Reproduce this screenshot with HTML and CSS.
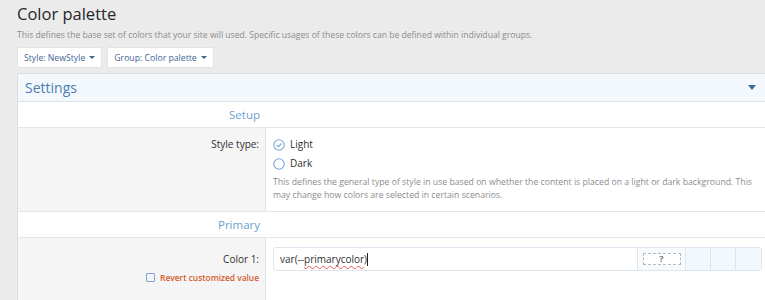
FILE: index.html
```html
<!DOCTYPE html>
<html>
<head>
<meta charset="utf-8">
<link rel="stylesheet" href="styles.css">
</head>
<body>
<div class="page">
  <h1 class="title">Color palette</h1>
  <p class="desc">This defines the base set of colors that your site will used. Specific usages of these colors can be defined within individual groups.</p>
  <div class="buttons">
    <span class="btn">Style: NewStyle <span class="caret"></span></span>
    <span class="btn">Group: Color palette <span class="caret"></span></span>
  </div>
  <div class="panel">
    <div class="panel-head">
      <span>Settings</span>
      <span class="head-caret"></span>
    </div>
    <div class="section">
      <div class="section-title">Setup</div>
      <div></div>
    </div>
    <div class="row row-style">
      <div class="label-cell"><span class="label">Style type:</span></div>
      <div class="value-cell">
        <div class="radio"><span class="radio-ico checked"><svg width="12" height="12" viewBox="0 0 12 12"><circle cx="6" cy="6" r="5.2" fill="none" stroke="#7aa6d6" stroke-width="1.1"/><path d="M3.6 6.1 L5.3 7.7 L8.4 4.5" fill="none" stroke="#7aa6d6" stroke-width="1.2"/></svg></span>Light</div>
        <div class="radio"><span class="radio-ico"><svg width="12" height="12" viewBox="0 0 12 12"><circle cx="6" cy="6" r="5.2" fill="none" stroke="#7aa6d6" stroke-width="1.1"/></svg></span>Dark</div>
        <p class="hint">This defines the general type of style in use based on whether the content is placed on a light or dark background. This may change how colors are selected in certain scenarios.</p>
      </div>
    </div>
    <div class="section">
      <div class="section-title">Primary</div>
      <div></div>
    </div>
    <div class="row row-color">
      <div class="label-cell">
        <span class="label">Color 1:</span>
        <span class="revert"><span class="box"></span>Revert customized value</span>
      </div>
      <div class="value-cell">
        <div class="color-input">
          <span class="input-text">var(--<span class="spell">primarycolor</span>)<span class="cursor"></span></span>
          <span class="qcell"><span class="qbox">?</span></span>
          <span class="swatch"></span>
          <span class="swatch"></span>
          <span class="swatch"></span>
        </div>
      </div>
    </div>
  </div>
</div>
</body>
</html>
```
FILE: styles.css
```css
html, body {
  margin: 0;
  padding: 0;
  background: #ebebeb;
  font-family: "Open Sans", "Noto Sans", sans-serif;
  color: #141414;
  overflow: hidden;
}
.page {
  padding: 2px 0 0 17px;
}
.title {
  margin: 0;
  font-size: 16.5px;
  font-weight: 400;
  line-height: 24px;
  color: #262626;
}
.desc {
  margin: 3px 0 0;
  font-size: 8.6px;
  line-height: 12px;
  color: #8c8c8c;
}
.buttons {
  display: flex;
  gap: 5px;
  margin-top: 6px;
}
.btn {
  display: flex;
  align-items: center;
  gap: 4px;
  height: 21px;
  padding: 0 6px;
  background: #fff;
  border: 1px solid #e2e2e2;
  border-radius: 2px;
  box-sizing: border-box;
  font-size: 8.7px;
  color: #3f6595;
}
.caret {
  width: 0;
  height: 0;
  border-left: 3px solid transparent;
  border-right: 3px solid transparent;
  border-top: 3.5px solid #3f6595;
}
.panel {
  margin-top: 5px;
  background: #fff;
  border: 1px solid #dedede;
  border-right: none;
}
.panel-head {
  display: flex;
  justify-content: space-between;
  align-items: center;
  height: 27px;
  padding: 0 9px 0 7px;
  background: #f3f8fd;
  border-bottom: 1px solid #dbe3ea;
  font-size: 14px;
  color: #4d7db3;
}
.head-caret {
  width: 0;
  height: 0;
  border-left: 4px solid transparent;
  border-right: 4px solid transparent;
  border-top: 5px solid #3d6a9c;
}
.section {
  display: grid;
  grid-template-columns: 248px 1fr;
  height: 25px;
  align-items: center;
  border-bottom: 1px solid #e6e6e6;
}
.section-title {
  text-align: right;
  padding-right: 6px;
  font-size: 11.5px;
  color: #6e9fd2;
}
.row {
  display: grid;
  grid-template-columns: 248px 1fr;
  border-bottom: 1px solid #e6e6e6;
}
.label-cell {
  background: #f5f5f5;
  border-right: 1px solid #e3e3e3;
  display: flex;
  flex-direction: column;
  align-items: flex-end;
  padding: 9px 6px 0 0;
}
.label {
  font-size: 10px;
  line-height: 14px;
  color: #2f2f2f;
}
.value-cell {
  padding: 7px 3px 0 7px;
}
.row-style {
  height: 84px;
  box-sizing: border-box;
}
.radio {
  display: flex;
  align-items: center;
  gap: 5px;
  font-size: 10px;
  line-height: 19px;
  color: #2f2f2f;
}
.radio-ico {
  display: flex;
}
.hint {
  margin: 3px 0 0;
  font-size: 8.7px;
  line-height: 13px;
  color: #8c8c8c;
  padding-right: 8px;
}
.row-color {
  height: 70px;
  box-sizing: border-box;
}
.row-color .label-cell {
  padding-top: 14px;
}
.row-color .value-cell {
  padding-top: 9px;
}
.revert {
  display: flex;
  align-items: center;
  gap: 5px;
  margin-top: 6px;
  font-size: 8.4px;
  font-weight: 600;
  color: #d5592d;
}
.box {
  width: 7px;
  height: 7px;
  border: 1px solid #7aa6d6;
  border-radius: 1px;
}
.color-input {
  display: flex;
  height: 24px;
  border: 1px solid #dde6ee;
  border-radius: 3px;
  box-sizing: border-box;
  overflow: hidden;
}
.input-text {
  flex: 1;
  display: flex;
  align-items: center;
  padding-left: 6px;
  font-size: 10px;
  color: #2f2f2f;
  border-right: 1px solid #dde6ee;
}
.spell {
  text-decoration: underline wavy #e05a5a;
  text-decoration-thickness: 1px;
  text-underline-offset: 2px;
}
.cursor {
  width: 1px;
  height: 13px;
  background: #222;
}
.qcell {
  flex: 0 0 47px;
  display: flex;
  align-items: center;
  justify-content: center;
  background: #f8fbfe;
  border-right: 1px solid #dde6ee;
}
.qbox {
  width: 38px;
  height: 12px;
  border: 1px dashed #b8b8b8;
  box-sizing: border-box;
  background: #fff;
  font-size: 9px;
  font-weight: 700;
  line-height: 10px;
  text-align: center;
  color: #777;
}
.swatch {
  flex: 0 0 24px;
  background: #f3f8fd;
  border-right: 1px solid #dde6ee;
}
.swatch:last-child {
  flex-basis: 25px;
  border-right: none;
}
```
